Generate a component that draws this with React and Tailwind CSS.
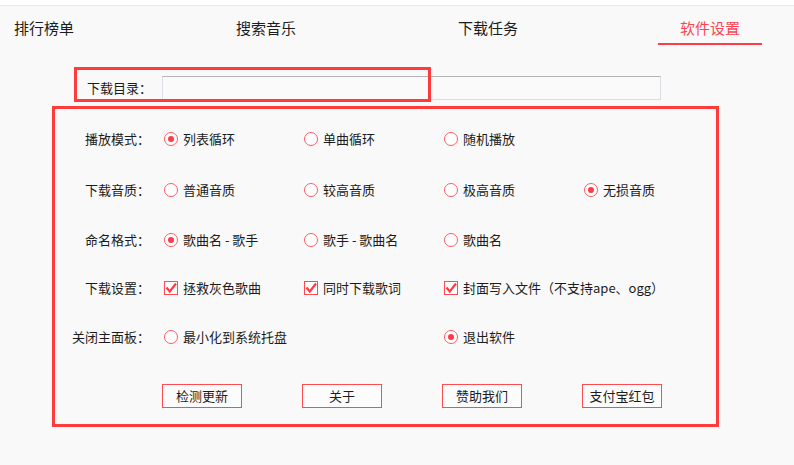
import React from "react";

const font = { fontFamily: '"Noto Sans CJK SC", "Noto Sans", sans-serif' };

const Radio = ({ checked, label }) => (
    <label className="flex items-center gap-[5px] ml-[2px]">
        <span className="w-[14px] h-[14px] shrink-0 rounded-full border border-[#ff5a63] bg-white flex items-center justify-center">
            {checked && <span className="w-[6px] h-[6px] rounded-full bg-[#ff3b47]" />}
        </span>
        <span className="whitespace-nowrap">{label}</span>
    </label>
);

const Check = ({ label }) => (
    <label className="flex items-center gap-[5px] ml-[2px]">
        <span className="w-[14px] h-[14px] shrink-0 border border-[#ff4a52] bg-white flex items-center justify-center">
            <svg width="12" height="12" viewBox="0 0 12 12">
                <path d="M1.5 5.5 L4.8 9.5 L11 1.5" fill="none" stroke="#ff3b47" strokeWidth="2.2" />
            </svg>
        </span>
        <span className="whitespace-nowrap">{label}</span>
    </label>
);

const Row = ({ label, h, children }) => (
    <div className={`${h} flex items-center`}>
        <div className="w-[95px] shrink-0 text-right whitespace-nowrap">{label}</div>
        <div className="pl-[12px] shrink-0 grid grid-cols-[140px_140px_140px_140px] items-center">
            {children}
        </div>
    </div>
);

const tabs = ["排行榜单", "搜索音乐", "下载任务", "软件设置"];

const App = () => {
    return (
        <div className="w-[794px] h-[465px] bg-white overflow-hidden text-[#1c1c1c]" style={font}>
            <div className="h-[6px] bg-white border-b border-[#e9e9e9]" />
            <div className="relative h-[459px] bg-[#f9f9f9]">
                {/* tabs */}
                <nav className="flex ml-[-8px] gap-[118px] pt-[12px] text-[15px]">
                    {tabs.map((t, i) => (
                        <div
                            key={t}
                            className={
                                i === 3
                                    ? "w-[104px] shrink-0 h-[27px] leading-[20px] text-center text-[#ff4553] border-b-2 border-[#ff3b47]"
                                    : "w-[104px] shrink-0 h-[27px] leading-[20px] text-center border-b-2 border-transparent"
                            }
                        >
                            {t}
                        </div>
                    ))}
                </nav>

                {/* download dir */}
                <div className="mt-[31px] flex items-center h-[24px] text-[13px]">
                    <div className="w-[152px] shrink-0 text-right">下载目录：</div>
                    <div className="ml-[10px] shrink-0 w-[499px] h-[24px] bg-[#fafafa] border border-[#dcdde3] border-t-[#b5b5b9]" />
                </div>
                <div className="absolute left-[74px] top-[61px] w-[357px] h-[35px] border-[3px] border-[#ff3b3b] pointer-events-none" />

                {/* settings */}
                <div className="mt-[6px] ml-[52px] w-[667px] h-[321px] border-[3px] border-[#ff3b3b] text-[13px] pt-[4px]">
                    <Row label="播放模式：" h="h-[51px]">
                        <Radio checked label="列表循环" />
                        <Radio label="单曲循环" />
                        <Radio label="随机播放" />
                    </Row>
                    <Row label="下载音质：" h="h-[52px]">
                        <Radio label="普通音质" />
                        <Radio label="较高音质" />
                        <Radio label="极高音质" />
                        <Radio checked label="无损音质" />
                    </Row>
                    <Row label="命名格式：" h="h-[48px]">
                        <Radio checked label="歌曲名 - 歌手" />
                        <Radio label="歌手 - 歌曲名" />
                        <Radio label="歌曲名" />
                    </Row>
                    <Row label="下载设置：" h="h-[48px]">
                        <Check label="拯救灰色歌曲" />
                        <Check label="同时下载歌词" />
                        <div className="col-span-2">
                            <Check label="封面写入文件（不支持ape、ogg）" />
                        </div>
                    </Row>
                    <Row label="关闭主面板：" h="h-[50px]">
                        <Radio label="最小化到系统托盘" />
                        <div />
                        <Radio checked label="退出软件" />
                    </Row>
                    <div className="mt-[22px] pl-[107px] grid grid-cols-[140px_140px_140px_140px]">
                        {["检测更新", "关于", "赞助我们", "支付宝红包"].map((b) => (
                            <button
                                key={b}
                                className="w-[80px] h-[24px] border border-[#ff4a4f] bg-[#fcfcfc] text-center leading-[22px]"
                            >
                                {b}
                            </button>
                        ))}
                    </div>
                </div>
            </div>
        </div>
    );
};

export default App;
